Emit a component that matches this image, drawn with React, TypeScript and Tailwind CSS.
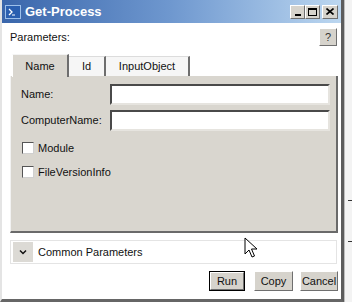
import React from 'react'

const font = { fontFamily: '"Liberation Sans", Arial, sans-serif' }

const Raised = ({ children, className = '' }: { children: React.ReactNode; className?: string }) => (
  <div
    className={`flex items-center justify-center bg-[#d6d3cc] border border-t-white border-l-white border-r-[#6f6f6f] border-b-[#6f6f6f] ${className}`}
  >
    {children}
  </div>
)

const Field = ({ label }: { label: string }) => (
  <div className="flex items-center h-[21px]">
    <span className="w-[89px] text-[11px] text-[#111]">{label}</span>
    <div className="flex-1 h-[21px] bg-white border-2 border-t-[#4a4a4a] border-l-[#4a4a4a] border-r-[#e6e4df] border-b-[#e6e4df]"></div>
  </div>
)

const Check = ({ label }: { label: string }) => (
  <div className="flex items-center gap-[4px] h-[14px]">
    <div className="w-[12px] h-[12px] bg-white border border-t-[#555] border-l-[#555] border-r-[#cfcfcf] border-b-[#cfcfcf]"></div>
    <span className="text-[11px] text-[#111]">{label}</span>
  </div>
)

const App = () => {
  return (
    <div className="w-[352px] h-[302px] flex bg-white overflow-hidden" style={font}>
      <div className="w-[344px] h-[302px] flex flex-col bg-white border-l-2 border-l-[#e4e4e4] border-r-[3px] border-r-[#5c5c5c] border-b-[3px] border-b-[#666] pb-[3px]">
        {/* title bar */}
        <div className="h-[23px] flex items-center bg-gradient-to-r from-[#3a66ab] via-[#6f98cf] to-[#bcd7f0] pl-[3px] pr-[3px]">
          <div className="w-[16px] h-[14px] bg-[#2a5fb0] border border-[#9dc0ea] flex items-center justify-start pl-[2px]">
            <svg width="8" height="8" viewBox="0 0 8 8">
              <path d="M1 1 L4 4 L1 7" stroke="white" strokeWidth="1.3" fill="none" />
              <path d="M4 7 H7" stroke="white" strokeWidth="1" />
            </svg>
          </div>
          <span className="ml-[4px] text-[13px] font-bold text-white leading-none">Get-Process</span>
          <div className="flex-1"></div>
          <div className="flex gap-0">
            <Raised className="w-[15px] h-[14px]">
              <div className="w-[6px] h-[2px] bg-black mt-[7px]"></div>
            </Raised>
            <Raised className="w-[15px] h-[14px]">
              <div className="w-[9px] h-[8px] border border-black border-t-2"></div>
            </Raised>
            <Raised className="w-[16px] h-[14px] ml-[2px]">
              <svg width="8" height="7" viewBox="0 0 8 7">
                <path d="M0.5 0.5 L7.5 6.5 M7.5 0.5 L0.5 6.5" stroke="black" strokeWidth="1.6" />
              </svg>
            </Raised>
          </div>
        </div>

        {/* body */}
        <div className="flex-1 flex flex-col pl-[8px] pr-[3px] pt-[5px]">
          <div className="flex items-center justify-between h-[18px]">
            <span className="text-[11px] text-[#111]">Parameters:</span>
            <Raised className="w-[18px] h-[18px] mr-[1px]">
              <span className="text-[11px] text-[#333]">?</span>
            </Raised>
          </div>

          {/* tabs */}
          <div className="flex items-end h-[22px] mt-[8px] pl-[2px]">
            <div className="h-[23px] w-[57px] bg-[#d9d6cf] border-l border-l-white border-t border-t-[#f4f4f4] border-r-2 border-r-[#6e6e6e] flex items-center justify-center relative top-[1px]">
              <span className="text-[11px] text-[#111]">Name</span>
            </div>
            <div className="h-[20px] w-[37px] bg-[#f6f6f6] border-t border-t-[#dcdcdc] border-r-2 border-r-[#6e6e6e] flex items-center justify-center">
              <span className="text-[11px] text-[#111]">Id</span>
            </div>
            <div className="h-[20px] w-[84px] bg-[#f6f6f6] border-t border-t-[#dcdcdc] border-r-2 border-r-[#6e6e6e] flex items-center justify-center">
              <span className="text-[11px] text-[#111]">InputObject</span>
            </div>
          </div>

          {/* tab panel */}
          <div className="h-[157px] bg-[#d9d6cf] border-r-2 border-r-[#6a6a6a] border-b-2 border-b-[#6a6a6a] border-l border-l-[#f2f2f2] flex flex-col pl-[10px] pr-[6px] pt-[8px]">
            <div className="flex flex-col gap-[5px]">
              <Field label="Name:" />
              <Field label="ComputerName:" />
            </div>
            <div className="flex flex-col gap-[10px] mt-[10px] pl-[1px]">
              <Check label="Module" />
              <Check label="FileVersionInfo" />
            </div>
          </div>

          {/* common parameters */}
          <div className="mt-[7px] h-[24px] border border-[#e4e4e4] flex items-center pl-[2px] mr-[1px]">
            <div className="w-[20px] h-[20px] bg-[#dcdad5] flex items-center justify-center">
              <svg width="8" height="6" viewBox="0 0 8 6">
                <path d="M1 1.5 L4 4.5 L7 1.5" stroke="#111" strokeWidth="1.5" fill="none" />
              </svg>
            </div>
            <span className="ml-[5px] text-[11px] text-[#111]">Common Parameters</span>
          </div>

          {/* buttons */}
          <div className="flex justify-end gap-[7px] mt-[7px]">
            <div className="border border-black">
              <Raised className="w-[34px] h-[18px]">
                <span className="text-[11px] text-[#111]">Run</span>
              </Raised>
            </div>
            <Raised className="w-[39px] h-[20px] ml-[2px]">
              <span className="text-[11px] text-[#111]">Copy</span>
            </Raised>
            <Raised className="w-[38px] h-[20px]">
              <span className="text-[11px] text-[#111]">Cancel</span>
            </Raised>
          </div>
        </div>
      </div>

      {/* background beyond the window */}
      <div className="flex-1 flex flex-col bg-[#f3f3f3] border-l border-l-[#bdbdbd]">
        <div className="h-[200px]"></div>
        <div className="h-px bg-[#333] w-[4px] ml-auto"></div>
        <div className="h-[40px]"></div>
        <div className="h-px bg-[#333] w-[4px] ml-auto"></div>
      </div>

      {/* mouse pointer */}
      <svg className="absolute left-[244px] top-[237px]" width="14" height="22" viewBox="0 0 14 22">
        <path d="M1 1 L1 17 L5 13 L8 20 L10.5 19 L7.5 12 L13 12 Z" fill="white" stroke="black" strokeWidth="1" strokeLinejoin="round" />
      </svg>
    </div>
  )
}

export default App
